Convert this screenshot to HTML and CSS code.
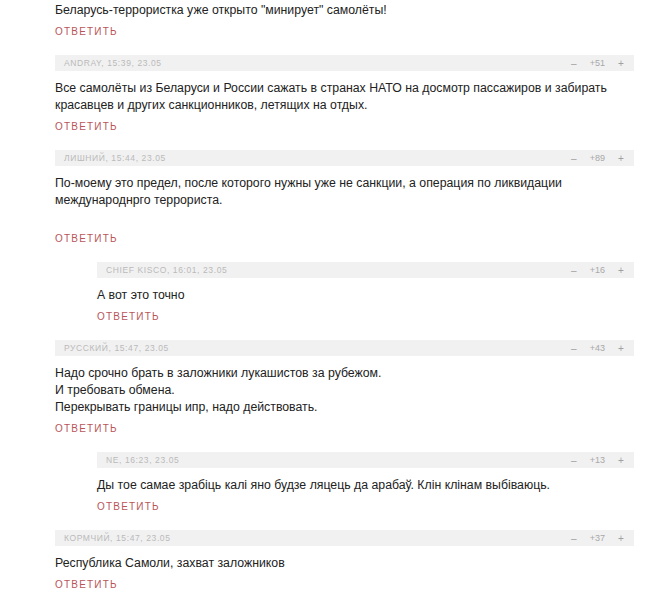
FILE: index.html
```html
<!DOCTYPE html>
<html lang="ru">
<head>
    <meta charset="UTF-8">
    <link rel="stylesheet" href="styles.css">
</head>
<body>
    <div class="comments">
        <!-- хвост предыдущего комментария -->
        <div class="comment first">
            <div class="comment-text">
                <p>Беларусь-террористка уже открыто "минирует" самолёты!</p>
            </div>
            <a class="reply" href="#">Ответить</a>
        </div>

        <div class="comment">
            <div class="comment-head">
                <span class="author">Andray, 15:39, 23.05</span>
                <div class="votes"><span class="vote">&ndash;</span><span class="score">+51</span><span class="vote">+</span></div>
            </div>
            <div class="comment-text">
                <p>Все самолёты из Беларуси и России сажать в странах НАТО на досмотр пассажиров и забирать красавцев и других санкционников, летящих на отдых.</p>
            </div>
            <a class="reply" href="#">Ответить</a>
        </div>

        <div class="comment">
            <div class="comment-head">
                <span class="author">Лишний, 15:44, 23.05</span>
                <div class="votes"><span class="vote">&ndash;</span><span class="score">+89</span><span class="vote">+</span></div>
            </div>
            <div class="comment-text">
                <p>По-моему это предел, после которого нужны уже не санкции, а операция по ликвидации международнрго террориста.</p>
                <p>&nbsp;</p>
            </div>
            <a class="reply" href="#">Ответить</a>

            <div class="comment child">
                <div class="comment-head">
                    <span class="author">Chief Kisco, 16:01, 23.05</span>
                    <div class="votes"><span class="vote">&ndash;</span><span class="score">+16</span><span class="vote">+</span></div>
                </div>
                <div class="comment-text">
                    <p>А вот это точно</p>
                </div>
                <a class="reply" href="#">Ответить</a>
            </div>
        </div>

        <div class="comment">
            <div class="comment-head">
                <span class="author">Русский, 15:47, 23.05</span>
                <div class="votes"><span class="vote">&ndash;</span><span class="score">+43</span><span class="vote">+</span></div>
            </div>
            <div class="comment-text">
                <p>Надо срочно брать в заложники лукашистов за рубежом.</p>
                <p>И требовать обмена.</p>
                <p>Перекрывать границы ипр, надо действовать.</p>
            </div>
            <a class="reply" href="#">Ответить</a>

            <div class="comment child">
                <div class="comment-head">
                    <span class="author">NE, 16:23, 23.05</span>
                    <div class="votes"><span class="vote">&ndash;</span><span class="score">+13</span><span class="vote">+</span></div>
                </div>
                <div class="comment-text">
                    <p>Ды тое самае зрабіць калі яно будзе ляцець да арабаў. Клін клінам выбіваюць.</p>
                </div>
                <a class="reply" href="#">Ответить</a>
            </div>
        </div>

        <div class="comment">
            <div class="comment-head">
                <span class="author">Кормчий, 15:47, 23.05</span>
                <div class="votes"><span class="vote">&ndash;</span><span class="score">+37</span><span class="vote">+</span></div>
            </div>
            <div class="comment-text">
                <p>Республика Самоли, захват заложников</p>
            </div>
            <a class="reply" href="#">Ответить</a>
        </div>
    </div>
</body>
</html>
```

FILE: styles.css
```css
body {
    margin: 0;
    padding: 0;
    background: #fff;
    color: #222;
    font-family: 'Liberation Sans', Arial, sans-serif;
}

.comments {
    width: 579px;
    padding: 0 0 0 55px;
}

.comment {
    display: flex;
    flex-direction: column;
    align-items: flex-start;
    padding-top: 16px;
}

.comment.first {
    padding-top: 2px;
}

.comment.child {
    align-self: stretch;
    margin-left: 42px;
}

/* серая плашка с автором и рейтингом */
.comment-head {
    align-self: stretch;
    display: flex;
    align-items: center;
    justify-content: space-between;
    height: 16px;
    padding: 0 7px 0 9px;
    background: #f1f1f1;
    font-size: 8.5px;
    color: #bababa;
}

.author {
    text-transform: uppercase;
    letter-spacing: 0.6px;
}

.votes {
    display: flex;
    align-items: center;
    font-size: 10px;
    color: #a0a0a0;
}

.vote {
    width: 12px;
    text-align: center;
    cursor: pointer;
}

.score {
    margin: 0 10px 0 10px;
    font-size: 9px;
    color: #a8a8a8;
}

.comment-text {
    margin-top: 9px;
    font-size: 12.3px;
    line-height: 17px;
}

.comment.first .comment-text {
    margin-top: 0;
}

.comment-text p {
    margin: 0;
}

.reply {
    margin-top: 6px;
    font-size: 10px;
    line-height: 14px;
    letter-spacing: 1.2px;
    text-transform: uppercase;
    color: #b8555a;
    text-decoration: none;
}
```
